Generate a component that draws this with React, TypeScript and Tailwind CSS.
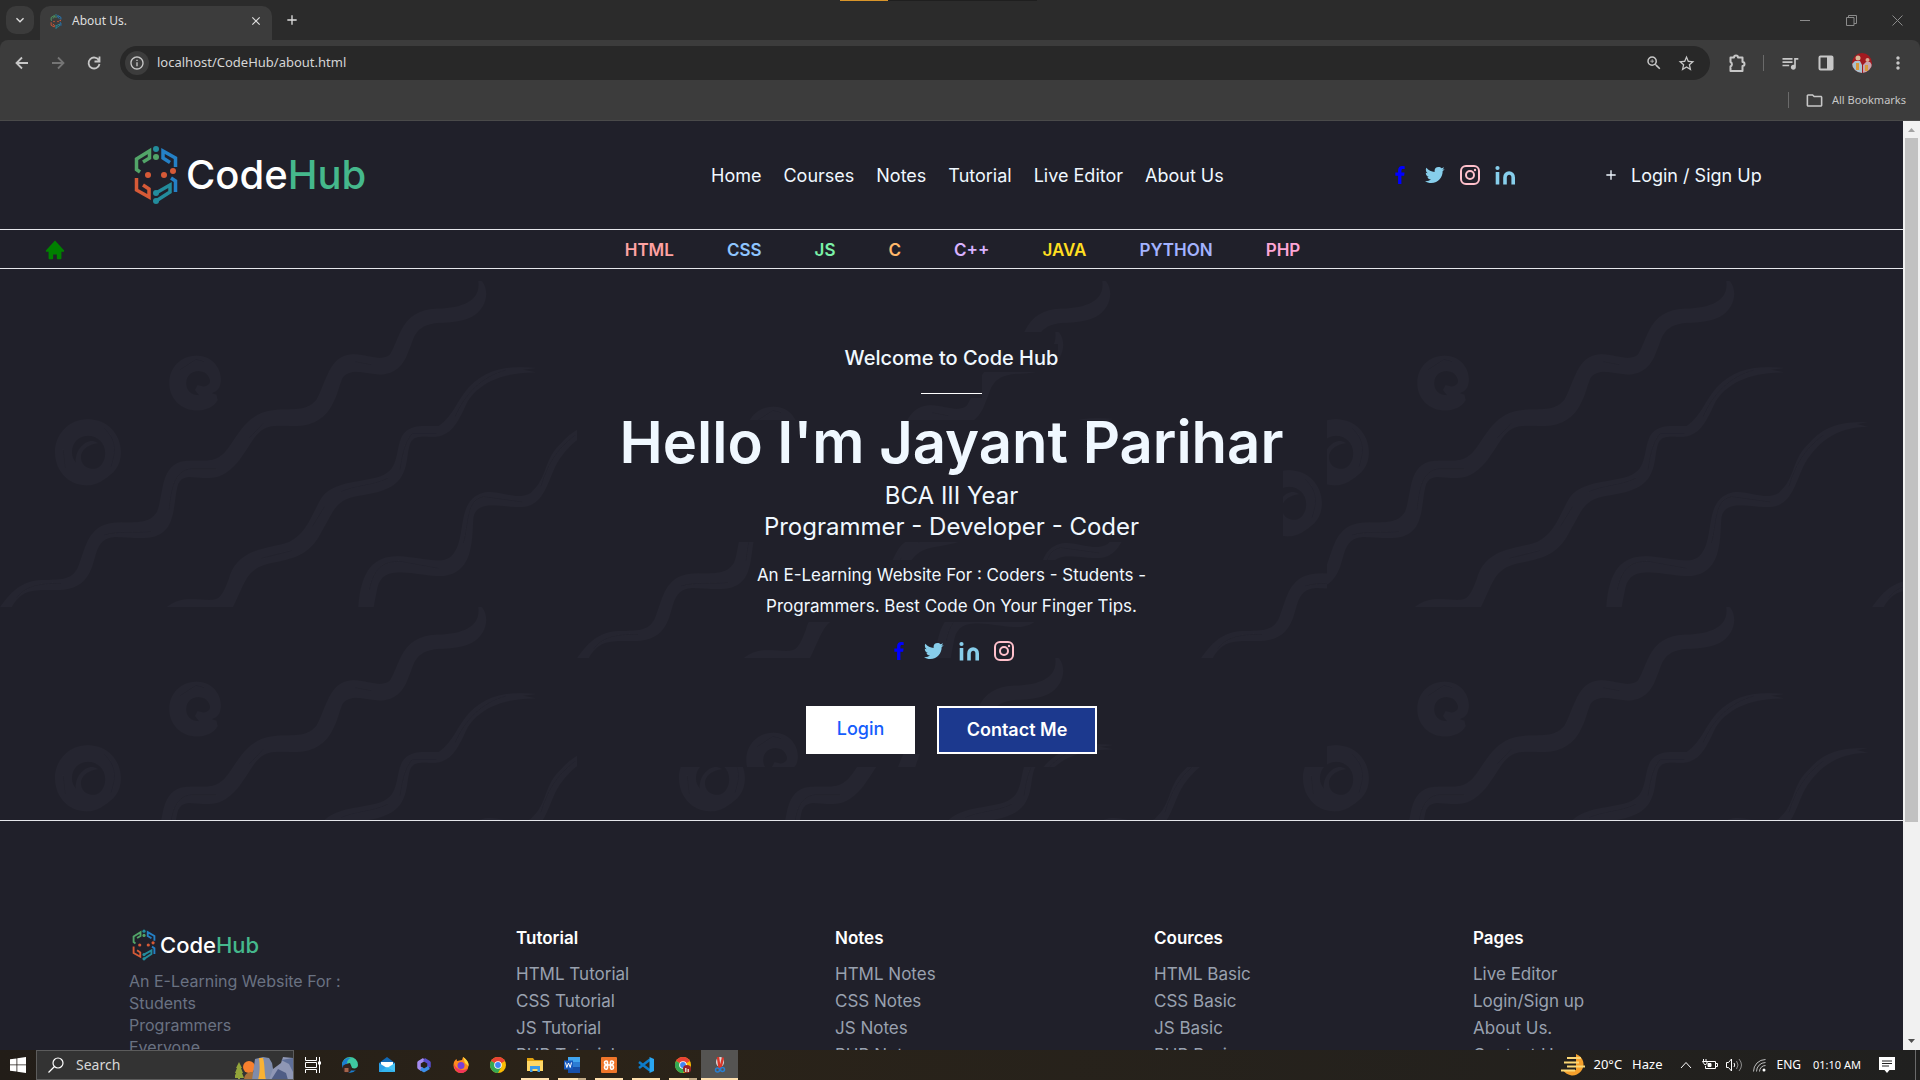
import React, { useId } from "react";
import {
  MdInfoOutline,
  MdOutlineZoomIn,
  MdStarBorder,
  MdQueueMusic,
  MdMoreVert,
  MdOutlineFolder,
  MdClose,
  MdAdd,
  MdKeyboardArrowDown,
} from "react-icons/md";
import { BiLogoFacebook, BiLogoTwitter, BiSolidHome, BiPlus } from "react-icons/bi";

/* ---------- Brand ---------- */

function LogoMark({ className }: { className: string }) {
  return (
    <svg viewBox="0 0 44 60" className={className} fill="none" aria-hidden="true">
      <path d="M6 27 L2.5 24.5 V14 L15.5 6 V13 L9 17" stroke="#52a468" strokeWidth="3.500" />
      <path d="M41.500 22 V13 L29 6 V13 L36 17.500" stroke="#2480c6" strokeWidth="3.500" />
      <path d="M37 33 L41.500 36 V47" stroke="#2480c6" strokeWidth="3.500" />
      <path d="M2.500 33 V45 L15 52 V44 L9 40" stroke="#d65a37" strokeWidth="3.500" />
      <path d="M22 48 L36 40 V47 L22 56" stroke="#238c9c" strokeWidth="3.500" />
      <circle cx="22" cy="4" r="3" fill="#238c9c" />
      <circle cx="22" cy="12" r="3" fill="#52a468" />
      <circle cx="22" cy="48" r="3" fill="#238c9c" />
      <circle cx="22" cy="56" r="3" fill="#238c9c" />
      <circle cx="14" cy="30" r="3" fill="#d65a37" />
      <circle cx="30" cy="30" r="3" fill="#d65a37" />
      <circle cx="39" cy="26" r="3" fill="#d65a37" />
    </svg>
  );
}

function InstagramIcon() {
  return (
    <svg viewBox="0 0 24 24" className="h-6 w-6 text-[#ffc0cb]" fill="none" stroke="currentColor" strokeWidth="2">
      <rect x="3" y="3" width="18" height="18" rx="5" />
      <circle cx="12" cy="12" r="4" />
      <circle cx="17" cy="7" r="1.200" fill="currentColor" stroke="none" />
    </svg>
  );
}

function LinkedinIcon() {
  return (
    <svg viewBox="0 0 24 24" className="h-6 w-6 text-[#87ceeb]" fill="none" stroke="currentColor" strokeWidth="3.600">
      <circle cx="4.500" cy="5" r="2.100" fill="currentColor" stroke="none" />
      <path d="M4.500 9v12.500M12 21.500v-7a4.100 4.500 0 0 1 8.200 0v7" />
    </svg>
  );
}

/* ---------- Doodle background tile ---------- */

function Doodles() {
  const id = useId();
  return (
    <svg className="absolute inset-0 h-full w-full" aria-hidden="true">
      <defs>
        <pattern id={id} width="624" height="326" patternUnits="userSpaceOnUse">
          <rect width="624" height="326" fill="#20202a" />
          <g transform="scale(0.40816 0.33333) translate(0 -33)" fill="#252530">
            <path d="M0 1012C25 970 50 932 105 930C150 930 175 930 190 895C210 840 212 765 280 758C330 755 365 765 385 725C402 680 390 580 455 573C500 570 525 580 550 548C585 500 600 425 680 419C720 416 750 425 775 390C800 340 805 255 865 253C905 255 930 275 955 255C980 210 980 120 1070 116C1120 115 1180 100 1172 33C1180 25 1192 50 1191 75C1185 150 1120 158 1075 158C1010 165 1015 210 1000 245C985 300 955 315 925 313C885 308 860 295 840 322C825 355 820 468 725 468C680 468 655 462 635 487C605 520 580 625 510 624C475 624 450 610 437 640C420 700 440 804 350 804C290 804 255 785 238 840C225 880 225 960 140 960C80 960 55 955 28 1012Z" />
            <path d="M408 1012C440 980 470 988 510 990C540 992 545 975 560 930C580 840 640 840 700 820C750 800 765 730 785 690C810 635 870 640 930 620C985 600 965 530 990 490C1010 460 1050 470 1075 468C1110 440 1120 390 1150 350C1190 300 1240 285 1312 294L1280 299L1312 307C1240 308 1180 330 1145 395C1120 460 1105 505 1050 500C1005 498 1005 510 998 560C990 640 960 660 890 675C820 685 820 720 790 780C765 840 740 860 680 875C600 890 605 930 570 1012Z" />
            <path d="M878 1012C885 900 915 860 975 859C1030 862 1080 885 1105 860C1150 810 1110 680 1195 666C1240 668 1270 690 1300 670C1345 620 1330 570 1375 520C1410 470 1450 455 1518 457L1490 462L1518 470C1440 470 1390 520 1360 590C1340 640 1330 715 1270 711C1220 708 1170 690 1160 740C1155 800 1165 918 1075 918C1010 915 940 880 925 950L915 1012Z" />
            <path d="M533 390C525 410 505 421 482 421C444 421 415 385 415 339C415 293 443 257 482 257C518 257 541 292 541 328C541 345 536 360 528 364L518 370L530 374ZM500 350C508 348 515 342 515 333C513 315 502 303 486 303C468 303 456 318 456 340C456 362 468 376 488 376L478 360L484 346Z" />
            <path
              fillRule="evenodd"
              d="M215 448C262 448 296 492 296 547C296 590 276 612 255 628C242 640 228 646 212 646C168 646 135 602 135 547C135 492 170 448 215 448ZM216 497C192 497 176 519 176 547C176 559 180 570 186 578C183 545 205 512 228 513L240 519C212 524 198 542 198 562C198 583 211 597 228 597C246 597 258 575 258 549C258 520 240 497 216 497Z"
            />
          </g>
          <g
            transform="scale(0.40816 0.33333) translate(0 -33)"
            stroke="#21212b"
            strokeWidth="2"
            fill="none"
          >
            <path d="M40 985C60 950 90 940 150 940M255 795C290 782 330 790 370 785M414 720C420 660 425 600 470 596H530M610 505L645 460M870 275L910 284" />
            <path d="M640 865L715 842M765 770L795 710M835 665C870 645 910 648 950 625M980 600C985 560 990 520 1010 490H1070M1115 440C1140 370 1180 320 1240 300" />
            <path d="M905 960C915 900 935 870 985 875L1075 895M1135 820C1150 760 1140 690 1185 680L1280 696M1325 650C1340 590 1360 540 1410 495" />
            <path d="M440 300L480 268L500 275M160 595L155 540M255 475C285 510 285 540 272 590" />
          </g>
        </pattern>
      </defs>
      <rect width="100%" height="100%" fill={`url(#${id})`} />
    </svg>
  );
}

/* ---------- Browser chrome ---------- */

function TabBar() {
  return (
    <div className="relative flex h-10 shrink-0 items-end bg-[#2b2b2b] text-[#dedede]">
      <button aria-label="Search tabs" className="mb-1.5 ml-1.5 flex h-7 w-7 items-center justify-center rounded-[10px] bg-[#3b3b3b]">
        <MdKeyboardArrowDown className="h-4 w-4" />
      </button>
      <div className="ml-1.5 flex h-[34px] w-58 items-center rounded-t-[10px] bg-[#3c3c3c] pr-2 pb-1 pl-2.5">
        <LogoMark className="h-[15px] w-3" />
        <span className="ml-2.5 flex-1 font-['Noto_Sans'] text-xs">About Us.</span>
        <button aria-label="Close tab" className="flex h-4 w-4 items-center justify-center">
          <MdClose className="h-3.5 w-3.5" />
        </button>
      </div>
      <button aria-label="New tab" className="mb-3 ml-3 flex h-4 w-4 items-center justify-center">
        <MdAdd className="h-4 w-4" />
      </button>
      <div className="absolute top-0 left-[43.75%] h-px w-[197px] bg-[#1f1f1f]">
        <div className="h-px w-12 bg-[#d9952a]" />
      </div>
      <div className="ml-auto flex h-10 items-center gap-[35px] pr-[17px] text-[#8b8b8b]">
        <button aria-label="Minimize">
          <svg viewBox="0 0 11 11" className="h-[11px] w-[11px]" fill="none" stroke="currentColor">
            <path d="M0 5.500h10" />
          </svg>
        </button>
        <button aria-label="Restore">
          <svg viewBox="0 0 11 11" className="h-[11px] w-[11px]" fill="none" stroke="currentColor">
            <path d="M0.500 2.500h7.500v8h-7.500zM2.500 2.500v-2h8v8h-2.500" />
          </svg>
        </button>
        <button aria-label="Close">
          <svg viewBox="0 0 11 11" className="h-[11px] w-[11px]" fill="none" stroke="currentColor">
            <path d="M0.500 0.500l10 10M10.500 0.500l-10 10" />
          </svg>
        </button>
      </div>
    </div>
  );
}

function Toolbar() {
  return (
    <div className="bg-[#2b2b2b]">
      <div className="rounded-t-lg border-b border-[#4a4a4a] bg-[#3c3c3c] pt-1.5 text-[#c7c7c7]">
        <div className="flex h-[34px] items-center">
          <button aria-label="Back" className="ml-3.5">
            <svg viewBox="0 0 16 16" className="h-4 w-4" fill="none" stroke="currentColor" strokeWidth="1.800">
              <path d="M14 8H3M8 2.500L2.500 8L8 13.500" />
            </svg>
          </button>
          <button aria-label="Forward" className="ml-5 text-[#757575]">
            <svg viewBox="0 0 16 16" className="h-4 w-4" fill="none" stroke="currentColor" strokeWidth="1.800">
              <path d="M2 8h11M8 2.500L13.500 8L8 13.500" />
            </svg>
          </button>
          <button aria-label="Reload" className="ml-5">
            <svg viewBox="0 0 16 16" className="h-4 w-4" fill="none" stroke="currentColor" strokeWidth="1.800">
              <path d="M13 5.500A5.500 5.500 0 1 0 13.500 9M13.500 1.500v5h-5" />
            </svg>
          </button>
          <div className="ml-[18px] flex h-[34px] flex-1 items-center rounded-full bg-[#282828] pr-3.5 pl-[5px]">
            <span className="flex h-6 w-6 items-center justify-center rounded-full bg-[#3c3c3c]">
              <MdInfoOutline className="h-4 w-4" />
            </span>
            <input
              aria-label="Address"
              defaultValue="localhost/CodeHub/about.html"
              className="ml-2 flex-1 bg-transparent font-['Noto_Sans'] text-[13px] text-[#d6d6d6] outline-none"
            />
            <button aria-label="Zoom">
              <MdOutlineZoomIn className="h-[18px] w-[18px]" />
            </button>
            <button aria-label="Bookmark" className="ml-3.5">
              <MdStarBorder className="h-[19px] w-[19px]" />
            </button>
          </div>
          <button aria-label="Extensions" className="ml-[18px]">
            <svg viewBox="0 0 19 19" className="h-[19px] w-[19px]" fill="none" stroke="currentColor" strokeWidth="2" strokeLinejoin="round">
              <path d="M2.500 3.500H6a2 2 0 0 1 4 0h4.500v4.500a2 2 0 0 1 0 4v5h-12v-4.500a2.500 2.500 0 0 0 0-4.500z" />
            </svg>
          </button>
          <span className="ml-4 h-4 w-px bg-[#6a6a6a]" />
          <button aria-label="Media" className="ml-4">
            <MdQueueMusic className="h-5 w-5" />
          </button>
          <button aria-label="Side panel" className="ml-[18px]">
            <svg viewBox="0 0 16 16" className="h-4 w-4" fill="none">
              <rect x="1.500" y="1.500" width="13" height="13" rx="1" stroke="currentColor" strokeWidth="2" />
              <path d="M9 1h6v14H9z" fill="currentColor" />
            </svg>
          </button>
          <button aria-label="Profile" className="ml-[18px]">
            <svg viewBox="0 0 20 20" className="h-5 w-5">
              <clipPath id="avatar">
                <circle cx="10" cy="10" r="10" />
              </clipPath>
              <g clipPath="url(#avatar)">
                <path d="M0 0h20v20H0z" fill="#a31a20" />
                <path d="M0 11l3-3h5l2 4v8H0z" fill="#a9c3cf" />
                <path d="M11 12l3-3h4l2 3v8h-9z" fill="#c7a5ad" />
                <circle cx="6" cy="5" r="2.500" fill="#d8b896" />
                <circle cx="15.500" cy="7" r="2" fill="#d8a890" />
                <path d="M4 10h3v7H4zM13 12h3v6h-3z" fill="#d89a3c" />
              </g>
            </svg>
          </button>
          <button aria-label="Menu" className="mr-3 ml-4">
            <MdMoreVert className="h-5 w-5" />
          </button>
        </div>
        <div className="flex h-10 items-center justify-end pr-3.5">
          <span className="h-4 w-px bg-[#6a6a6a]" />
          <button className="ml-4 flex items-center gap-2 font-['Noto_Sans'] text-[11px]">
            <MdOutlineFolder className="h-[19px] w-[19px]" />
            All Bookmarks
          </button>
        </div>
      </div>
    </div>
  );
}

function Scrollbar() {
  return (
    <div className="flex w-[17px] shrink-0 flex-col items-center bg-[#f1f1f1]" aria-hidden="true">
      <svg viewBox="0 0 17 17" className="h-[17px] w-[17px]">
        <path d="M5 11l3.500-4 3.500 4z" fill="#a3a3a3" />
      </svg>
      <div className="h-[684px] w-[13px] bg-[#c1c1c1]" />
      <svg viewBox="0 0 17 17" className="mt-auto h-[17px] w-[17px]">
        <path d="M5 6l3.500 4L12 6z" fill="#505050" />
      </svg>
    </div>
  );
}

/* ---------- Page ---------- */

const menu = ["Home", "Courses", "Notes", "Tutorial", "Live Editor", "About Us"];

const languages = [
  { name: "HTML", color: "text-red-300" },
  { name: "CSS", color: "text-blue-300" },
  { name: "JS", color: "text-green-300" },
  { name: "C", color: "text-orange-300" },
  { name: "C++", color: "text-purple-300" },
  { name: "JAVA", color: "text-yellow-300" },
  { name: "PYTHON", color: "text-indigo-300" },
  { name: "PHP", color: "text-pink-300" },
];

function SiteHeader() {
  return (
    <header>
      <div className="grid h-[109px] grid-cols-[711fr_677fr_215fr_300fr] items-center border-b border-[#e5e7eb] text-[18px] text-[#f0f8ff]">
        <a href="#home" className="flex items-center gap-2 pl-[134px] text-[40px] font-medium text-white">
          <LogoMark className="h-[60px] w-11" />
          <span>
            Code<span className="text-[#45b88c]">Hub</span>
          </span>
        </a>
        <nav className="flex gap-[22px]">
          {menu.map((item) => (
            <a key={item} href="#menu" className="whitespace-nowrap">
              {item}
            </a>
          ))}
        </nav>
        <div className="flex gap-[11px]">
          <a href="#facebook" aria-label="Facebook"><BiLogoFacebook className="h-6 w-6 text-[#0000ff]" /></a>
          <a href="#twitter" aria-label="Twitter"><BiLogoTwitter className="h-6 w-6 text-[#87ceeb]" /></a>
          <a href="#instagram" aria-label="Instagram"><InstagramIcon /></a>
          <a href="#linkedin" aria-label="LinkedIn"><LinkedinIcon /></a>
        </div>
        <a href="#login" className="flex items-center gap-3 whitespace-nowrap">
          <BiPlus className="h-4 w-4" />
          Login / Sign Up
        </a>
      </div>
      <div className="flex h-[39px] items-center border-b border-[#e5e7eb]">
        <a href="#home" aria-label="Home page" className="ml-11 pt-0.5">
          <BiSolidHome className="h-[22px] w-[22px] text-[#008000]" />
        </a>
        <nav className="flex flex-1 justify-center gap-[53px] pt-[3px] pr-11 text-[17px] font-semibold">
          {languages.map((l) => (
            <a key={l.name} href="#language" className={l.color}>
              {l.name}
            </a>
          ))}
        </nav>
      </div>
    </header>
  );
}

function Hero() {
  return (
    <section className="border-b border-[#e5e7eb] pt-3">
      <div className="relative overflow-hidden pt-[51px] pb-[53px]">
        <Doodles />
        <div className="relative mx-auto flex h-[435px] w-[750px] flex-col items-center overflow-hidden text-center text-[#f0f8ff]">
          <Doodles />
          <p className="relative mt-3 bg-[#20202a] text-xl leading-7 font-medium">Welcome to Code Hub</p>
          <div className="relative flex h-[26px] w-[61px] flex-col justify-end bg-[#20202a] pb-1">
            <hr className="border-t border-white" />
          </div>
          <div className="relative mt-[22px] bg-[#20202a]">
            <h1 className="pb-4 text-[58px] leading-[44px] font-semibold whitespace-nowrap">
              Hello I&apos;m Jayant Parihar
            </h1>
            <p className="text-2xl leading-[31px]">
              BCA III Year
              <br />
              Programmer - Developer - Coder
            </p>
          </div>
          <p className="relative mt-[18px] w-[390px] bg-[#20202a] text-[17px] leading-[31px] whitespace-nowrap">
            An E-Learning Website For : Coders - Students -
            <br />
            Programmers. Best Code On Your Finger Tips.
          </p>
          <div className="relative mt-[17px] flex gap-[11px]">
            <a href="#facebook" aria-label="Facebook"><BiLogoFacebook className="h-6 w-6 text-[#0000ff]" /></a>
            <a href="#twitter" aria-label="Twitter"><BiLogoTwitter className="h-6 w-6 text-[#87ceeb]" /></a>
            <a href="#linkedin" aria-label="LinkedIn"><LinkedinIcon /></a>
            <a href="#instagram" aria-label="Instagram"><InstagramIcon /></a>
          </div>
          <div className="relative mt-auto mb-[13px] flex h-12 gap-[22px] bg-[#20202a] text-[18px]">
            <button className="w-[109px] bg-white pb-1 font-medium text-blue-600">Login</button>
            <button className="w-[160px] border-2 border-white bg-blue-900 pb-0.5 font-semibold text-white">Contact Me</button>
          </div>
        </div>
      </div>
    </section>
  );
}

const footerColumns = [
  { title: "Tutorial", links: ["HTML Tutorial", "CSS Tutorial", "JS Tutorial", "PHP Tutorial"] },
  { title: "Notes", links: ["HTML Notes", "CSS Notes", "JS Notes", "PHP Notes"] },
  { title: "Cources", links: ["HTML Basic", "CSS Basic", "JS Basic", "PHP Basic"] },
  { title: "Pages", links: ["Live Editor", "Login/Sign up", "About Us.", "Contact Us."] },
];

function Footer() {
  return (
    <footer className="grid grid-cols-[387fr_319fr_319fr_319fr_301fr] pt-[106px] pr-[129px] pl-[129px]">
      <div>
        <a href="#home" className="flex items-center gap-1 pl-[3px] text-[22px] leading-9 font-medium text-white">
          <LogoMark className="h-8 w-6" />
          <span>
            Code<span className="text-[#45b88c]">Hub</span>
          </span>
        </a>
        <p className="mt-[7px] text-base leading-[22px] text-gray-500">
          An E-Learning Website For :
          <br />
          Students
          <br />
          Programmers
          <br />
          Everyone
        </p>
      </div>
      {footerColumns.map((column) => (
        <div key={column.title}>
          <h2 className="text-[17px] leading-[22px] font-semibold text-white">{column.title}</h2>
          <ul className="mt-3 text-[17px] leading-[27px] text-gray-400">
            {column.links.map((link) => (
              <li key={link}>
                <a href="#footer">{link}</a>
              </li>
            ))}
          </ul>
        </div>
      ))}
    </footer>
  );
}

/* ---------- Taskbar ---------- */

function ChromeIcon({ badge = false }: { badge?: boolean }) {
  return (
    <svg viewBox="0 0 16 16" className="h-4 w-4" aria-hidden="true">
      <circle cx="8" cy="8" r="8" fill="#fbbc04" />
      <path d="M8 8L1.070 4A8 8 0 0 1 14.930 4z" fill="#ea4335" />
      <path d="M1.070 4A8 8 0 0 0 8 16l3.400-6L8 8z" fill="#34a853" />
      <circle cx="8" cy="8" r="3.800" fill="#fff" />
      <circle cx="8" cy="8" r="2.900" fill="#4285f4" />
      {badge && (
        <>
          <circle cx="12" cy="12" r="4" fill="#9c2028" />
          <path d="M10 11h1.500v4H10zM12.500 12H14v3h-1.500z" fill="#e3d3c3" />
        </>
      )}
    </svg>
  );
}

const apps: { name: string; open?: boolean; multi?: boolean; active?: boolean; icon: React.ReactNode }[] = [
  {
    name: "Task view",
    icon: (
      <svg viewBox="0 0 16 16" className="h-4 w-4" fill="none" stroke="#fff">
        <path d="M0.500 0v3.500h11V0M0.500 16v-3.500h11V16M0.500 5.500h11v5h-11zM14.500 0v16" />
        <path d="M13 4.500h3v3h-3z" fill="#fff" stroke="none" />
      </svg>
    ),
  },
  {
    name: "Edge",
    icon: (
      <svg viewBox="0 0 16 16" className="h-4 w-4">
        <path d="M0 8a8 8 0 0 1 16 0c0 3-3 4-6 3L8 6z" fill="#3fc9a0" />
        <path d="M0 8c0-5 5-8 9-7C5 2 4 6 6 11c2 3 6 3 8 2A8 8 0 0 1 0 8z" fill="#1b7fd1" />
        <circle cx="5" cy="11.500" r="4.500" fill="#35241f" />
        <path d="M2.500 11h4v4h-4z" fill="#a5634a" />
      </svg>
    ),
  },
  {
    name: "Mail",
    icon: (
      <svg viewBox="0 0 16 16" className="h-4 w-4">
        <path d="M0 6l8-6 8 6v9H0z" fill="#1169b5" />
        <path d="M2 5h12v6H2z" fill="#fff" />
        <path d="M0 6l8 5-8 4z" fill="#2b9fe6" />
        <path d="M16 6l-8 5 8 4z" fill="#47c3f5" />
        <path d="M0 15l8-5 8 5z" fill="#33b5ef" />
      </svg>
    ),
  },
  {
    name: "Microsoft 365",
    icon: (
      <svg viewBox="0 0 16 16" className="h-4 w-4" fill="none" strokeWidth="3.500" strokeLinejoin="round">
        <path d="M8 2.500L3 5.500v5l3 2" stroke="#a58cf0" />
        <path d="M8 2.500l5 3v5" stroke="#5a4fcf" />
        <path d="M13 10.500l-5 3-3-2" stroke="#3c8ee8" />
      </svg>
    ),
  },
  {
    name: "Firefox",
    icon: (
      <svg viewBox="0 0 16 16" className="h-4 w-4">
        <path d="M8 16a7.500 7.500 0 0 1-7.500-8c0-3 1.500-5 3-6l.5 2L9 3l1-3c3 2 6 5 5.500 9A7.500 7.500 0 0 1 8 16z" fill="#ff8a1c" />
        <path d="M1 7c0 6 4 9 7 9s6-2 7-5c-3 3-11 3-14-4z" fill="#f3345a" />
        <circle cx="8" cy="8.500" r="3.500" fill="#7a3fd6" />
        <path d="M10 0c3 2 6 5 5.500 9L12 6z" fill="#ffd83a" />
      </svg>
    ),
  },
  { name: "Chrome", icon: <ChromeIcon /> },
  {
    name: "File Explorer",
    open: true,
    icon: (
      <svg viewBox="0 0 16 16" className="h-4 w-4">
        <path d="M0 1h6l1.500 2H16v4H0z" fill="#e0a10f" />
        <path d="M0 4h16v10H0z" fill="#ffd766" />
        <path d="M3 9h10v6h-2.500v-3h-5v3H3z" fill="#3c9be8" />
      </svg>
    ),
  },
  {
    name: "Word",
    open: true,
    multi: true,
    icon: (
      <svg viewBox="0 0 16 16" className="h-4 w-4">
        <path d="M4 0h12v5H4z" fill="#41a5ee" />
        <path d="M4 5h12v5H4z" fill="#2b7cd3" />
        <path d="M4 10h12v6H4z" fill="#174fa8" />
        <path d="M0 3.500h9v9H0z" fill="#185abd" />
        <path d="M1.500 5.500l1.300 5L4.500 6l1.700 4.500 1.300-5" fill="none" stroke="#fff" />
      </svg>
    ),
  },
  {
    name: "XAMPP",
    open: true,
    icon: (
      <svg viewBox="0 0 16 16" className="h-4 w-4" fill="none">
        <rect width="16" height="16" rx="1" fill="#f0762a" />
        <path d="M8 8C4 8 3.500 7 3.500 5.500S6.500 3 6.500 5.500v5c0 2.500-3 2-3 0S4 8 8 8s4.500-1 4.500-2.500-3-2.500-3 0v5c0 2.500 3 2 3 0S12 8 8 8z" stroke="#fff" strokeWidth="1.600" />
      </svg>
    ),
  },
  {
    name: "Visual Studio Code",
    open: true,
    icon: (
      <svg viewBox="0 0 16 16" className="h-4 w-4" fill="none">
        <path d="M12 2.500L1 11M12 13.500L1 5" stroke="#0d7cc9" strokeWidth="2.600" />
        <path d="M11.500 0L16 2v12l-4.500 2z" fill="#2aa6f0" />
      </svg>
    ),
  },
  { name: "Chrome profile", open: true, multi: true, icon: <ChromeIcon badge /> },
  {
    name: "Snipping Tool",
    open: true,
    active: true,
    icon: (
      <svg viewBox="0 0 16 16" className="h-4 w-4" fill="none">
        <ellipse cx="8" cy="5" rx="4" ry="5" fill="#d8d8d8" />
        <path d="M6 0l1.500 11M11 0.500L8.500 11" stroke="#d8372a" strokeWidth="2.400" />
        <circle cx="5.500" cy="13" r="2" stroke="#2a7fd0" strokeWidth="1.500" />
        <circle cx="10.500" cy="12.500" r="2" stroke="#2a7fd0" strokeWidth="1.500" />
      </svg>
    ),
  },
];

function Taskbar() {
  return (
    <div className="flex h-[30px] shrink-0 items-center bg-linear-to-r from-[#221d18] via-[#2b2318] via-30% to-[#20201f] font-['Noto_Sans'] text-xs text-white">
      <button aria-label="Start" className="flex w-9 justify-center">
        <svg viewBox="0 0 16 16" className="h-4 w-4" fill="#fff">
          <path d="M0 2.300L6.500 1.400v6.100H0zM7.300 1.300L16 0v7.500H7.300zM0 8.300h6.500v6.200L0 13.700zM7.300 8.300H16V16l-8.700-1.300z" />
        </svg>
      </button>
      <label className="flex h-[30px] w-[258px] items-center overflow-hidden border border-[#5c5c5c] bg-[#333333] pl-[11px]">
        <svg viewBox="0 0 16 16" className="h-4 w-4 shrink-0" fill="none" stroke="#fff" strokeWidth="1.200">
          <circle cx="10" cy="6" r="5" />
          <path d="M6.500 9.500L0.500 15.500" />
        </svg>
        <input
          type="text"
          aria-label="Search"
          placeholder="Search"
          className="ml-3 w-0 flex-1 bg-transparent text-sm text-white outline-none placeholder:text-[#d8d8d8]"
        />
        <svg viewBox="0 0 58 30" className="h-[30px] w-[58px] shrink-0" aria-hidden="true">
          <circle cx="14" cy="17" r="6" fill="#f7802e" />
          <path d="M9 30c0-5 3-8 9-8l3 8z" fill="#a9713a" />
          <path d="M17 30l3-21 8-2 6 1 3 5 3 17z" fill="#7f8cab" />
          <path d="M34 30l4-11 8-6 2-6 10 1v22z" fill="#8f97b5" />
          <path d="M36 30l7-11 8 4 2 7z" fill="#4f5d85" />
          <path d="M46 10l8 4 4 8V8z" fill="#5f6f98" />
          <path d="M24 8h4c2 6 1 14 3 22h-8c2-8 2-14 1-22z" fill="#f9b233" />
          <path d="M4 12l3 6H6l2 5H7l2 5H5v2H3v-2H-1l2-5H0l2-5H1z" fill="#93a53a" />
        </svg>
      </label>
      <div className="flex h-full">
        {apps.map((app) => (
          <button
            key={app.name}
            aria-label={app.name}
            className={
              app.active
                ? "flex h-full w-[37px] flex-col items-center justify-between bg-[#555452] pt-[7px]"
                : "flex h-full w-[37px] flex-col items-center justify-between pt-[7px]"
            }
          >
            {app.icon}
            <span
              className={
                app.active
                  ? "h-0.5 w-full bg-[#ffe0ae]"
                  : app.multi
                    ? "h-0.5 w-7 border-r-8 border-[#c2ab87] bg-[#ffe0ae]"
                    : app.open
                      ? "h-0.5 w-7 bg-[#ffe0ae]"
                      : "h-0.5 w-7"
              }
            />
          </button>
        ))}
      </div>
      <div className="ml-auto flex items-center whitespace-nowrap">
        <button className="flex items-center text-[13px]">
          <svg viewBox="0 0 24 22" className="mr-2 h-[22px] w-6" fill="none">
            <path d="M15 0a11 11 0 1 1-13 16h13z" fill="#f5a02c" />
            <path d="M6 4h14M3 8.500h15M6 12.500h18M0 16.500h14" stroke="#fbd774" strokeWidth="2" />
          </svg>
          20°C<span className="ml-2.5">Haze</span>
        </button>
        <button aria-label="Hidden icons" className="ml-[18px]">
          <svg viewBox="0 0 12 8" className="h-2 w-3" fill="none" stroke="#fff">
            <path d="M1 7l5-5.500L11 7" />
          </svg>
        </button>
        <button aria-label="Battery" className="ml-2.5">
          <svg viewBox="0 0 16 12" className="h-3 w-4" fill="none" stroke="#fff">
            <path d="M5 2.500h8.500v7h-10V7M14 4.500h1.500v3H14M1.500 0v2M4 0v2M0.500 2.500h4.500v2l-2 1.500z" />
            <path d="M6 4.500h3v3H6z" fill="#fff" />
          </svg>
        </button>
        <button aria-label="Volume" className="ml-2">
          <svg viewBox="0 0 17 14" className="h-3.5 w-[17px]" fill="none" stroke="#fff">
            <path d="M0.500 4.500h2l3-3.500v12l-3-3.500h-2zM8 5q1.500 2 0 4" />
            <path d="M10.500 3q3 4 0 8M13 1q5 6 0 12" stroke="#8d8d8d" />
          </svg>
        </button>
        <button aria-label="Network" className="ml-2.5">
          <svg viewBox="0 0 13 13" className="h-[13px] w-[13px]" fill="none" stroke="#bdbdbd">
            <path d="M0.500 12.500A12 12 0 0 1 12.500 0.500M3.500 12.500a9 9 0 0 1 9-9M6.500 12.500a6 6 0 0 1 6-6" />
            <circle cx="11" cy="11" r="1.500" fill="#fff" stroke="none" />
          </svg>
        </button>
        <span className="ml-2.5">ENG</span>
        <time className="ml-3 text-[11px]">01:10 AM</time>
        <button aria-label="Notifications" className="ml-[18px]">
          <svg viewBox="0 0 16 16" className="h-4 w-4" fill="#fff">
            <path d="M0 0h16v13h-5.500L8 16l-2.500-3H0z" />
            <path d="M3 4h10M3 6.500h10M3 9h7" stroke="#222" />
          </svg>
        </button>
        <span className="mr-1 ml-5 h-[30px] w-px bg-[#6a6a6a]" />
      </div>
    </div>
  );
}

export default function App() {
  return (
    <div className="flex h-screen flex-col overflow-hidden bg-[#20202a]">
      <TabBar />
      <Toolbar />
      <div className="flex min-h-0 flex-1">
        <main className="min-w-0 flex-1 overflow-hidden bg-[#20202a] font-['Inter',sans-serif]">
          <SiteHeader />
          <Hero />
          <Footer />
        </main>
        <Scrollbar />
      </div>
      <Taskbar />
    </div>
  );
}
